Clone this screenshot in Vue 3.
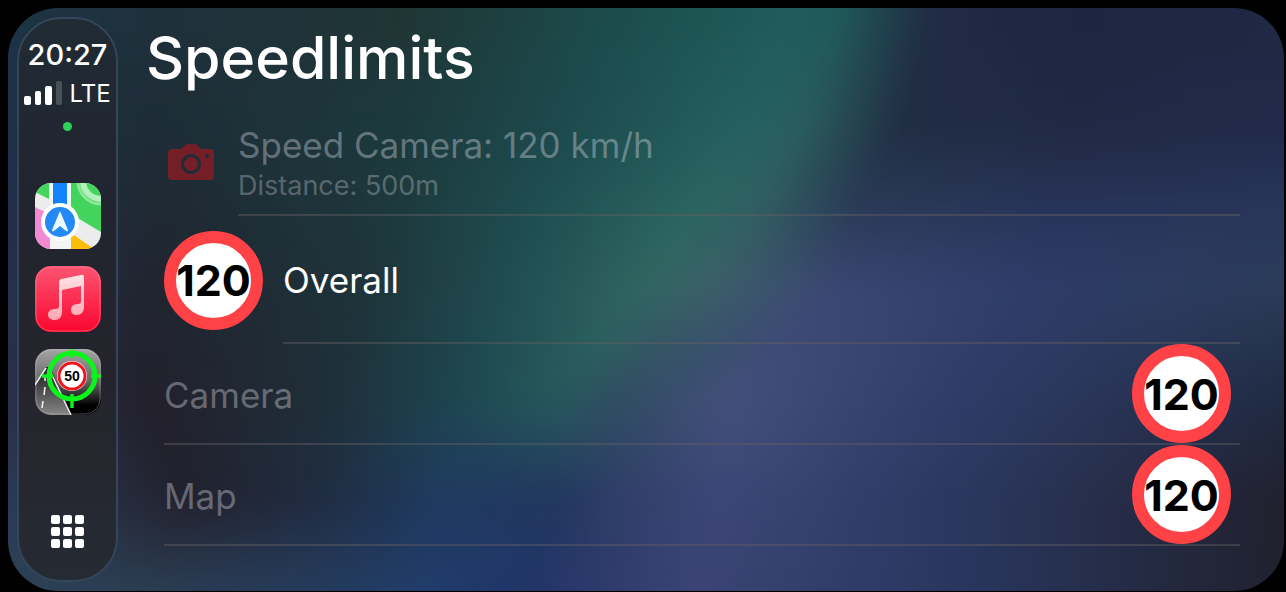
<template>
  <div class="screen">
    <svg class="wallpaper" viewBox="0 0 1286 592" preserveAspectRatio="none" aria-hidden="true">
      <defs>
        <linearGradient
          v-for="band in bands"
          :id="'band' + band.id"
          :key="band.id"
          gradientUnits="userSpaceOnUse"
          x1="0"
          y1="0"
          x2="1286"
          y2="0"
        >
          <stop v-for="(s, i) in band.stops" :key="i" :offset="s.x / 1286" :stop-color="s.color" />
        </linearGradient>
        <filter id="soften" x="0" y="0" width="1" height="1" color-interpolation-filters="sRGB">
          <feGaussianBlur stdDeviation="12" />
        </filter>
      </defs>
      <g filter="url(#soften)">
        <rect
          v-for="band in bands"
          :key="band.id"
          x="-60"
          :y="band.y"
          width="1406"
          :height="bandHeight + 1"
          :fill="`url(#band${band.id})`"
        />
      </g>
    </svg>

    <nav class="dock">
      <div class="clock">20:27</div>
      <div class="network">
        <svg width="39" height="25" viewBox="0 0 39 25" aria-hidden="true">
          <rect x="0" y="15" width="7" height="9" rx="2" fill="#fff" />
          <rect x="11" y="10" width="6" height="14" rx="2" fill="#fff" />
          <rect x="21" y="5" width="7" height="19" rx="2" fill="#fff" />
          <rect x="32" y="0" width="6" height="24" rx="2" fill="#4b5057" />
        </svg>
        <span>LTE</span>
      </div>
      <span class="dot"></span>

      <div class="apps">
        <button class="app" aria-label="Maps">
          <svg viewBox="0 0 66 66">
            <rect width="66" height="66" fill="#ececec" />
            <path d="M0 0H14V16L0 9Z" fill="#43d45e" />
            <path d="M36 0H66V49L36 31Z" fill="#43d45e" />
            <g fill="none" stroke="#8ee79a">
              <circle cx="66" cy="-2" r="23" stroke-width="3" />
              <circle cx="66" cy="-2" r="18" stroke-width="6" stroke="#b5efbc" />
            </g>
            <path d="M0 24L16 32V66H0Z" fill="#f18ad3" />
            <rect x="15" width="21" height="66" fill="#f3f5f5" />
            <path d="M36 50L59 66H36Z" fill="#fbbd09" />
            <rect x="18" width="14" height="40" fill="#1284fb" />
            <circle cx="25" cy="39" r="19" fill="#fff" />
            <circle cx="25" cy="39" r="15" fill="#2389f5" />
            <path d="M25 28L33 47Q33 49 31 48L25 43L19 48Q17 49 17 47Z" fill="#e8fbff" />
          </svg>
        </button>
        <button class="app" aria-label="Music">
          <svg viewBox="0 0 66 66">
            <defs>
              <linearGradient id="musicBg" x1="0" y1="0" x2="0" y2="1">
                <stop offset="0" stop-color="#fb5573" />
                <stop offset="1" stop-color="#fb062f" />
              </linearGradient>
              <linearGradient id="note" x1="0" y1="0" x2="0" y2="1">
                <stop offset="0" stop-color="#ffe3e6" />
                <stop offset="1" stop-color="#ffa6b0" />
              </linearGradient>
            </defs>
            <rect width="66" height="66" fill="url(#musicBg)" />
            <path
              d="M26 13L46 9Q49 8 49 11V41C49 46 46 49 42 49C38 49 36 47 36 44C36 40 39 38 43 38C45 38 46 37 46 35V20L27 24V46C27 51 24 54 20 54C16 54 13 52 13 49C13 45 16 43 20 43C23 43 24 42 24 40V16Q24 14 26 13Z"
              fill="url(#note)"
            />
            <rect x="1" y="1" width="64" height="64" rx="15" fill="none" stroke="#ff8b9b" stroke-opacity="0.5" />
          </svg>
        </button>
        <button class="app" aria-label="Speedlimits">
          <svg viewBox="0 0 66 66">
            <defs>
              <linearGradient id="sky" x1="0" y1="0" x2="0" y2="1">
                <stop offset="0" stop-color="#a5a5a5" />
                <stop offset="0.5" stop-color="#666" />
                <stop offset="0.85" stop-color="#000" />
              </linearGradient>
              <linearGradient id="road" x1="0" y1="0" x2="0" y2="1">
                <stop offset="0.2" stop-color="#2d2d2d" />
                <stop offset="1" stop-color="#868686" />
              </linearGradient>
            </defs>
            <rect width="66" height="66" fill="url(#sky)" />
            <path d="M0 36L11 18H15L36 66H0Z" fill="url(#road)" />
            <path d="M0 36L11 19M15 22L36 66" fill="none" stroke="#eee" stroke-width="1.5" />
            <path d="M10 28V32M10 38L9 46M8 52L7 59" stroke="#eee" stroke-width="1.6" />
            <g fill="none" stroke="#0bf51a">
              <circle cx="37" cy="27" r="23" stroke-width="5" />
              <path d="M37 0V9M37 45V59M7 27H18M56 27H66" stroke-width="3.5" />
            </g>
            <circle cx="37" cy="27" r="15" fill="#fff" />
            <circle cx="37" cy="27" r="13" fill="#fff" stroke="#f0121c" stroke-width="3" />
            <text x="37" y="32" class="mini-limit">50</text>
            <rect x="1" y="1" width="64" height="64" rx="15" fill="none" stroke="#ccc" stroke-opacity="0.35" />
          </svg>
        </button>
      </div>

      <button class="grid" aria-label="Home">
        <svg width="34" height="34" viewBox="0 0 34 34">
          <template v-for="r in 3" :key="r">
            <rect v-for="c in 3" :key="c" :x="(c - 1) * 12" :y="(r - 1) * 12" width="9" height="9" rx="2" fill="#fff" />
          </template>
        </svg>
      </button>
    </nav>

    <main class="content">
      <h1>Speedlimits</h1>
      <ul>
        <li class="row alert dim">
          <svg class="camera" width="48" height="38" viewBox="0 0 48 38" aria-hidden="true">
            <path
              fill-rule="evenodd"
              d="M5 5H14L17 2Q18 0 21 0H27Q30 0 31 2L34 5H43Q47 5 47 9V32Q47 36 43 36H5Q1 36 1 32V9Q1 5 5 5ZM24 10A10 10 0 1 0 24 30A10 10 0 1 0 24 10ZM24 13A7 7 0 1 1 24 27A7 7 0 1 1 24 13ZM40 10A2 2 0 1 0 40 14A2 2 0 1 0 40 10Z"
              fill="#741f28"
            />
          </svg>
          <div class="cell stacked">
            <span class="label">Speed Camera: 120 km/h</span>
            <span class="detail">Distance: 500m</span>
          </div>
        </li>
        <li class="row overall">
          <span class="sign">120</span>
          <div class="cell"><span class="label">Overall</span></div>
        </li>
        <li v-for="source in sources" :key="source.name" class="row dim">
          <div class="cell">
            <span class="label">{{ source.name }}</span>
            <span class="sign">{{ source.limit }}</span>
          </div>
        </li>
      </ul>
    </main>
  </div>
</template>

<script setup>
const sources = [
  { name: 'Camera', limit: 120 },
  { name: 'Map', limit: 120 }
]

// wallpaper colours: every row has the same stops, from left to right
const rows = [
  { y: 10, xs: [10, 150, 400, 600, 780, 835, 930, 1080, 1286], colors: ['#1d3444', '#1f303b', '#1f3535', '#1c4b4c', '#1f5d5a', '#20595a', '#202b43', '#1e2540', '#1f2942'] },
  { y: 120, xs: [10, 150, 400, 560, 740, 800, 900, 1080, 1286], colors: ['#1e3046', '#1d2c36', '#1c3a3d', '#1d4a4e', '#25605f', '#2a5c5e', '#202d43', '#202944', '#20294a'] },
  { y: 205, xs: [10, 150, 380, 520, 690, 750, 850, 1060, 1286], colors: ['#222e48', '#1f2832', '#1d383c', '#1e4c4f', '#2c6561', '#315f62', '#2b3b58', '#28345a', '#28375a'] },
  { y: 280, xs: [10, 140, 360, 500, 640, 710, 830, 1030, 1286], colors: ['#25304b', '#20242f', '#1e333a', '#1f4c50', '#306561', '#3b5f68', '#3b4673', '#2e3c68', '#2b3b58'] },
  { y: 395, xs: [10, 140, 330, 450, 545, 620, 725, 950, 1286], colors: ['#292f46', '#22202b', '#1e303a', '#1d4550', '#25585b', '#304c63', '#434f7b', '#303c68', '#1f2a42'] },
  { y: 495, xs: [10, 180, 320, 430, 560, 610, 720, 950, 1286], colors: ['#2a3a54', '#22212d', '#1f2c42', '#1f3a60', '#22365f', '#2f3d68', '#3c4677', '#2a3860', '#21202e'] },
  { y: 592, xs: [10, 150, 300, 430, 520, 590, 690, 950, 1286], colors: ['#2c4256', '#2b3e54', '#263c5c', '#203c6b', '#213468', '#2c3a6a', '#3b4474', '#293760', '#20212e'] }
]

const bandHeight = 8

function mix(a, b, t) {
  const parts = [1, 3, 5].map((i) => {
    const from = parseInt(a.slice(i, i + 2), 16)
    const to = parseInt(b.slice(i, i + 2), 16)
    return Math.round(from + (to - from) * t)
  })
  return `rgb(${parts.join(',')})`
}

// starts above and ends below the screen so the blur never fades at its edge
const bands = Array.from({ length: 88 }, (_, id) => {
  const y = (id - 7) * bandHeight
  let k = 0
  while (k < rows.length - 2 && rows[k + 1].y < y) k++
  const a = rows[k]
  const b = rows[k + 1]
  const t = Math.min(1, Math.max(0, (y - a.y) / (b.y - a.y)))
  const stops = a.xs.map((x, i) => ({
    x: x + (b.xs[i] - x) * t,
    color: mix(a.colors[i], b.colors[i], t)
  }))
  return { id, y, stops }
})
</script>

<style>
html,
body {
  margin: 0;
  background: #000;
}
</style>

<style scoped>
.screen {
  position: relative;
  box-sizing: border-box;
  display: flex;
  min-height: calc(100vh - 9px);
  margin: 8px 2px 0 8px;
  padding: 9px 44px 9px 9px;
  border-radius: 50px;
  overflow: hidden;
  color: #fff;
  font-family: Inter, 'Liberation Sans', sans-serif;
}

.wallpaper {
  position: absolute;
  inset: 0;
  width: 100%;
  height: 100%;
  overflow: visible;
}

.dock {
  position: relative;
  box-sizing: border-box;
  flex: none;
  display: flex;
  flex-direction: column;
  align-items: center;
  width: 101px;
  padding: 18px 0 31px;
  border: 2px solid #34465a;
  border-radius: 44px;
  background: linear-gradient(#202b34, #21242f 35%, #25242c 65%, #252b33);
}

.clock {
  font-size: 29px;
  font-weight: 500;
  line-height: 36px;
}

.network {
  display: flex;
  align-items: center;
  gap: 6px;
  height: 40px;
  font-size: 24px;
}

.dot {
  width: 9px;
  height: 9px;
  margin-top: 9px;
  border-radius: 50%;
  background: #30d158;
}

.apps {
  display: flex;
  flex-direction: column;
  gap: 17px;
  margin-top: 52px;
}

button {
  display: block;
  padding: 0;
  border: 0;
  background: none;
}

.app {
  width: 66px;
  height: 66px;
  border-radius: 16px;
  overflow: hidden;
}

.app svg,
.grid svg {
  display: block;
}

.mini-limit {
  font-size: 14px;
  font-weight: 700;
  text-anchor: middle;
}

.grid {
  margin-top: auto;
}

.content {
  position: relative;
  flex: 1;
  min-width: 0;
  padding-left: 28px;
}

h1 {
  margin: 0;
  font-size: 59px;
  font-weight: 500;
  line-height: 82px;
}

ul {
  margin: 16px 0 0;
  padding: 0 0 0 18px;
  list-style: none;
}

.row {
  display: flex;
  align-items: center;
  gap: 20px;
  min-height: 101px;
}

.overall {
  min-height: 128px;
}

.cell {
  box-sizing: border-box;
  flex: 1;
  align-self: stretch;
  display: flex;
  align-items: center;
  justify-content: space-between;
  padding-right: 9px;
  border-bottom: 2px solid rgba(100, 95, 100, 0.45);
}

.stacked {
  flex-direction: column;
  align-items: flex-start;
  justify-content: flex-start;
  padding-top: 6px;
}

.camera {
  margin: 0 3px 6px;
}

.label {
  padding-top: 2px;
  font-size: 35px;
  line-height: 44px;
}

.detail {
  font-size: 27px;
  line-height: 38px;
}

.dim .label {
  color: rgba(235, 235, 245, 0.35);
}

.dim .detail {
  color: rgba(235, 235, 245, 0.3);
}

.sign {
  box-sizing: border-box;
  flex: none;
  display: flex;
  align-items: center;
  justify-content: center;
  width: 99px;
  height: 99px;
  border: 12px solid #ff4245;
  border-radius: 50%;
  background: #fff;
  color: #000;
  font-size: 43px;
  font-weight: 700;
}
</style>
